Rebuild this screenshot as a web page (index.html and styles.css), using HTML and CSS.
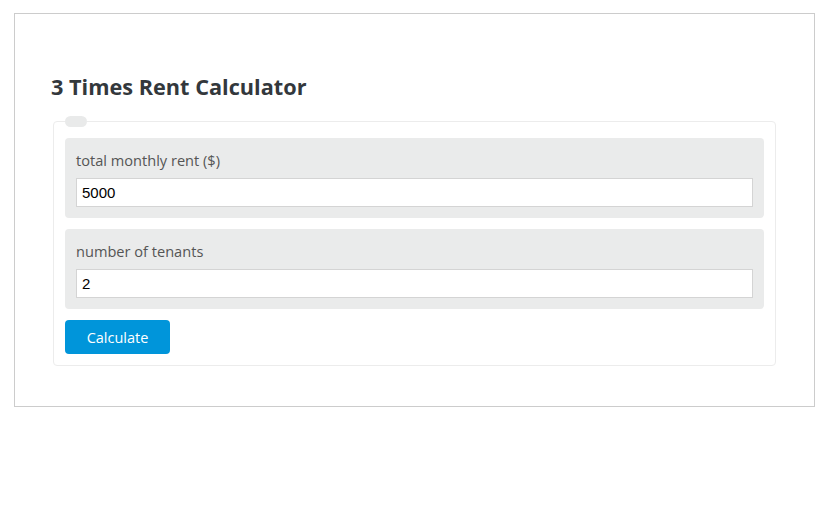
FILE: index.html
```html
<!DOCTYPE html>
<html lang="en">
<head>
    <meta charset="UTF-8">
    <meta name="viewport" content="width=device-width, initial-scale=1.0">
    <title>3 Times Rent Calculator</title>
    <link rel="stylesheet" href="styles.css">
</head>
<body>

<div class="calc-box">
    <h1>3 Times Rent Calculator</h1>
    <fieldset class="calc-form">
        <legend></legend>
        <div class="field">
            <label for="rent">total monthly rent ($)</label>
            <input type="text" id="rent" value="5000">
        </div>
        <div class="field">
            <label for="tenants">number of tenants</label>
            <input type="text" id="tenants" value="2">
        </div>
        <button type="button" id="calcBtn">Calculate</button>
        <div class="result"></div>
    </fieldset>
</div>

<script>
    // Each tenant needs to earn 3x their share of the rent
    document.getElementById('calcBtn').addEventListener('click', function () {
        const rent = parseFloat(document.getElementById('rent').value);
        const tenants = parseFloat(document.getElementById('tenants').value);
        const result = document.querySelector('.result');
        if (!rent || !tenants) {
            result.textContent = 'Please enter valid numbers.';
            return;
        }
        const income = (rent / tenants) * 3;
        result.textContent = 'Required monthly income per tenant: $' + income.toFixed(2);
    });
</script>

</body>
</html>
```

FILE: styles.css
```css
body {
    margin: 0;
    font-family: "Open Sans", "Noto Sans", Arial, sans-serif;
    background-color: #fff;
    color: #555;
}
.calc-box {
    margin: 13px 12px 0 14px;
    padding: 58px 36px 40px;
    border: 1px solid #ccc;
}
h1 {
    margin: 0 0 14px;
    font-size: 21.7px;
    line-height: 30px;
    font-weight: 700;
    color: #33383c;
}
.calc-form {
    margin: 0 2px;
    padding: 11px 11px 11px;
    border: 1px solid #ececec;
    border-radius: 4px;
}
.calc-form legend {
    width: 22px;
    height: 11px;
    padding: 0;
    background-color: #e9eaea;
    border-radius: 6px;
}
.field {
    background-color: #eaebeb;
    border-radius: 4px;
    padding: 11px 11px 11px;
    margin-bottom: 11px;
}
.field label {
    display: block;
    font-size: 14.6px;
    line-height: 22px;
    margin-bottom: 7px;
    color: #555;
}
.field input {
    display: block;
    width: 100%;
    box-sizing: border-box;
    height: 29px;
    padding: 0 5px;
    border: 1px solid #d4d4d4;
    font-family: "Liberation Sans", Arial, sans-serif;
    font-size: 15px;
    color: #000;
    background-color: #fff;
}
#calcBtn {
    display: block;
    width: 105px;
    height: 34px;
    margin-top: 11px;
    border: none;
    border-radius: 4px;
    background-color: #0095da;
    color: #fff;
    font-family: "Open Sans", "Noto Sans", Arial, sans-serif;
    font-size: 14.5px;
    cursor: pointer;
}
.result {
    font-size: 15px;
    color: #333;
}
.result:empty {
    display: none;
}
```
